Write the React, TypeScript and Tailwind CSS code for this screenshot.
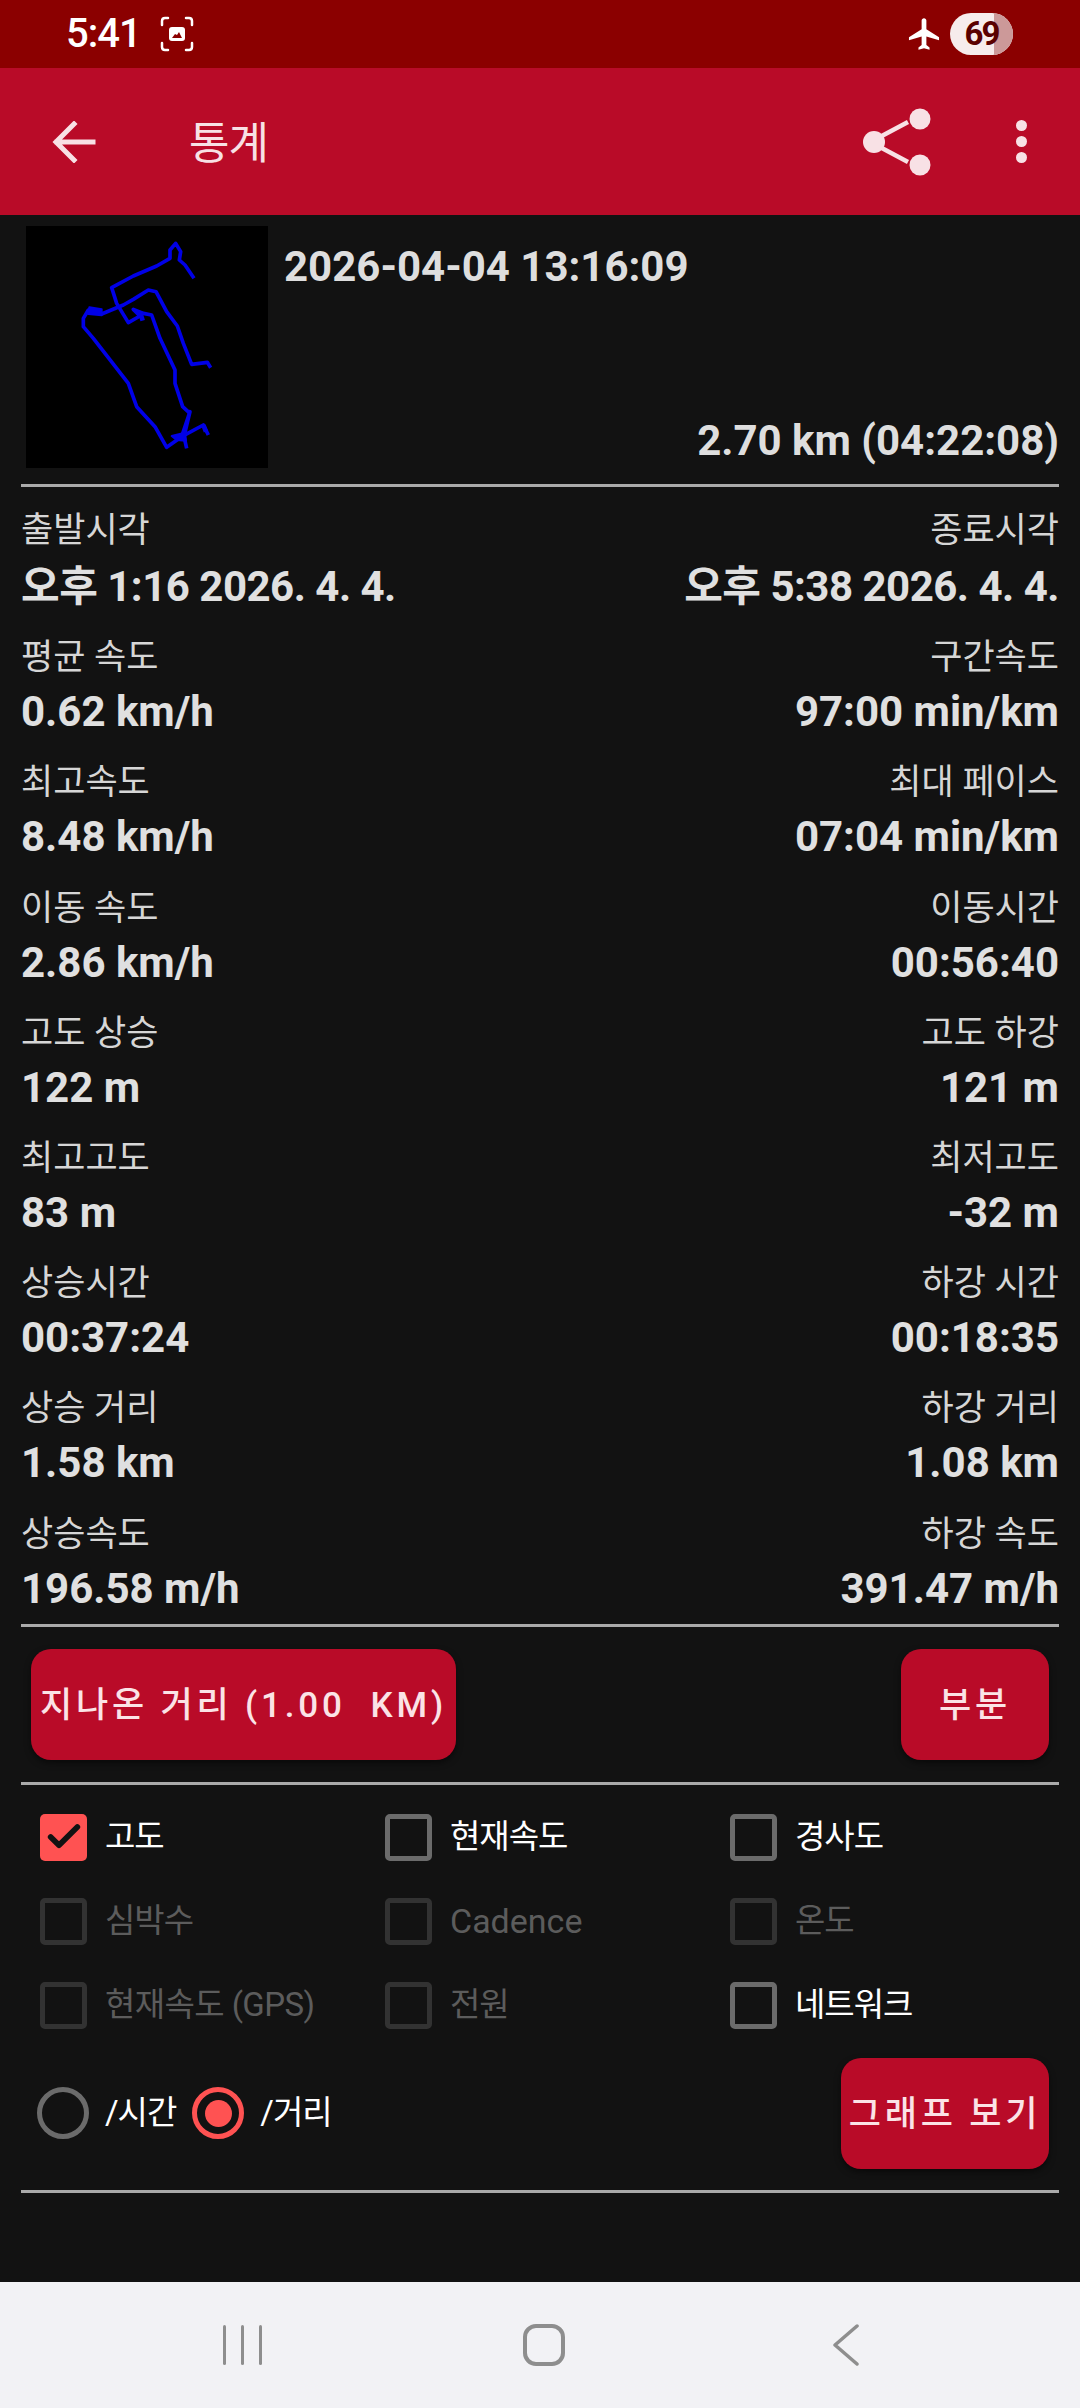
import { Check } from "lucide-react";

const stats = [
  ["출발시각", "오후 1:16 2026. 4. 4.", "종료시각", "오후 5:38 2026. 4. 4."],
  ["평균 속도", "0.62 km/h", "구간속도", "97:00 min/km"],
  ["최고속도", "8.48 km/h", "최대 페이스", "07:04 min/km"],
  ["이동 속도", "2.86 km/h", "이동시간", "00:56:40"],
  ["고도 상승", "122 m", "고도 하강", "121 m"],
  ["최고고도", "83 m", "최저고도", "-32 m"],
  ["상승시간", "00:37:24", "하강 시간", "00:18:35"],
  ["상승 거리", "1.58 km", "하강 거리", "1.08 km"],
  ["상승속도", "196.58 m/h", "하강 속도", "391.47 m/h"],
];

function Divider() {
  return <div className="h-[3px] bg-[#aaaaaa]" />;
}

function StatRow({ row, first }: { row: string[]; first: boolean }) {
  const label = first
    ? "text-[35px] leading-[48px] text-[#d6d6d6]"
    : "mt-[2px] text-[35px] leading-[48px] text-[#d6d6d6]";
  const value = first
    ? "mt-[8px] text-[42px] leading-[48px] font-bold tracking-[-0.5px] text-[#e0e0e0]"
    : "mt-[6px] text-[42px] leading-[48px] font-bold text-[#e0e0e0]";
  return (
    <div className="flex h-[125.2px] justify-between">
      <div className="flex flex-col">
        <span className={label}>{row[0]}</span>
        <span className={value}>{row[1]}</span>
      </div>
      <div className="flex flex-col items-end">
        <span className={label}>{row[2]}</span>
        <span className={value}>{row[3]}</span>
      </div>
    </div>
  );
}

function Box({
  label,
  state,
  type = "text-[33px] tracking-[-1px]",
}: {
  label: string;
  state: "on" | "off" | "disabled";
  type?: string;
}) {
  return (
    <div className="flex h-[47px] items-center">
      {state === "on" ? (
        <div className="flex h-[47px] w-[47px] items-center justify-center rounded-[5px] bg-[#ff5252]">
          <Check size={40} strokeWidth={3.4} className="text-[#121212]" />
        </div>
      ) : (
        <div
          className={
            state === "off"
              ? "h-[47px] w-[47px] rounded-[5px] border-[5px] border-[#6b6b6b]"
              : "h-[47px] w-[47px] rounded-[5px] border-[5px] border-[#323232]"
          }
        />
      )}
      <span className={"ml-[18px] " + type + (state === "disabled" ? " text-[#5c5c5c]" : " text-white")}>
        {label}
      </span>
    </div>
  );
}

function RedButton({ label, className }: { label: string; className: string }) {
  return (
    <button
      className={
        "flex h-[111px] items-center justify-center rounded-[20px] bg-[#b90b28] pt-[5px] text-[35px] font-medium tracking-[3.8px] whitespace-pre text-[#fbe3e6] shadow-[0_3px_6px_rgba(0,0,0,0.5)] " +
        className
      }
    >
      {label}
    </button>
  );
}

export default function App() {
  return (
    <div className="flex h-[2408px] w-[1080px] flex-col overflow-hidden bg-[#121212] font-['Roboto','Noto_Sans_CJK_KR',sans-serif]">
      {/* status bar */}
      <div className="flex h-[68px] items-center justify-between bg-[#8b0000] pr-[67px] pl-[66px]">
        <div className="flex items-center">
          <span className="text-[40px] font-medium tracking-[-1px] text-white">5:41</span>
          <svg viewBox="0 0 36 36" className="ml-[18px] h-[36px] w-[36px]" fill="none" stroke="white" strokeWidth="2.500" strokeLinecap="round">
            <path d="M9 2H6Q3 2 3 5v4M27 2h3q3 0 3 3v4M3 27v4q0 3 3 3h3M33 27v4q0 3-3 3h-3" />
            <rect x="10" y="11" width="16" height="14" rx="3" fill="white" stroke="none" />
            <path d="M13 22l3-4 2 1 2-3 3 6z" fill="#8b0000" stroke="none" />
          </svg>
        </div>
        <div className="flex items-center">
          <svg viewBox="0 0 24 24" className="h-[38px] w-[38px]" fill="white">
            <path d="M21 16v-2l-8-5V3.5C13 2.67 12.33 2 11.5 2S10 2.67 10 3.5V9l-8 5v2l8-2.5V19l-2 1.500V22l3.500-1 3.500 1v-1.500L13 19v-5.500z" transform="translate(0.5 0)" />
          </svg>
          <div className="relative ml-[7px] flex h-[42px] w-[63px] items-center justify-center overflow-hidden rounded-full bg-[#f6ecec]">
            <div className="absolute top-0 right-0 h-full w-[19px] bg-[#cc9999]" />
            <span className="relative text-[33px] font-bold tracking-[-2px] text-[#5a0000]">69</span>
          </div>
        </div>
      </div>

      {/* app bar */}
      <div className="flex h-[147px] items-center bg-[#b90b28] text-[#f8e1e5]">
        <svg viewBox="0 0 44 42" className="ml-[52px] h-[42px] w-[44px]" fill="none" stroke="currentColor" strokeWidth="5" strokeLinecap="square">
          <path d="M41 21H5M22 3L4 21l18 18" />
        </svg>
        <span className="mt-[4px] ml-[93px] text-[44px] leading-none tracking-[-1px]">통계</span>
        <svg viewBox="0 0 70 68" className="mr-[84px] ml-auto h-[68px] w-[70px]" fill="currentColor" stroke="currentColor">
          <path d="M16 30L46 14M16 38l30 16" strokeWidth="4.500" fill="none" />
          <circle cx="12" cy="34" r="11" stroke="none" />
          <circle cx="58" cy="11" r="10.500" stroke="none" />
          <circle cx="58" cy="57" r="10.500" stroke="none" />
        </svg>
        <div className="mr-[53px] flex flex-col gap-[5px]">
          <div className="h-[11px] w-[11px] rounded-full bg-current" />
          <div className="h-[11px] w-[11px] rounded-full bg-current" />
          <div className="h-[11px] w-[11px] rounded-full bg-current" />
        </div>
      </div>

      <div className="flex flex-1 flex-col px-[21px]">
        {/* track header */}
        <div className="flex h-[269px] pt-[11px] pl-[5px]">
          <svg viewBox="78 48 726 726" className="h-[242px] w-[242px] shrink-0 bg-black" fill="none" stroke="#0000e6" strokeWidth="11" strokeLinejoin="round">
            <path d="M582 205L555 165L538 150L542 125L527 100L510 120L510 145L470 168L400 198L335 233L350 280L385 338L420 318L400 298L430 310L455 315L480 385L525 480L525 520L548 590L570 610" />
            <path d="M632 473L622 457L575 463L550 400L532 348L500 305L468 245L445 240L400 268L370 285L305 312L265 300L250 325L250 350L280 385L385 520L410 590L465 650L500 712L545 680L570 605L552 680L560 715M545 680L610 645L625 675" />
            <path d="M268 292L305 298L305 316L265 312Z" fill="#0000e6" strokeWidth="6" />
            <path d="M515 678L555 668L558 692L530 690Z" fill="#0000e6" strokeWidth="6" />
            <path d="M420 305L428 332" strokeWidth="14" />
            <path d="M610 645L618 665" strokeWidth="14" />
          </svg>
          <div className="flex flex-1 flex-col justify-between pb-[18px] pl-[16px]">
            <span className="mt-[16px] text-[42px] leading-[50px] font-bold text-[#dedede]">2026-04-04 13:16:09</span>
            <span className="text-right text-[42px] leading-[50px] font-bold text-[#dedede]">2.70 km (04:22:08)</span>
          </div>
        </div>
        <Divider />

        {/* stats */}
        <div className="flex flex-col pt-[20px]">
          {stats.map((row, i) => (
            <StatRow key={row[0]} row={row} first={i === 0} />
          ))}
        </div>
        <div className="-mt-[10px]">
          <Divider />
        </div>

        {/* buttons */}
        <div className="flex justify-between px-[10px] py-[22px]">
          <RedButton label="지나온 거리 (1.00  KM)" className="w-[425px]" />
          <RedButton label="부분" className="w-[148px]" />
        </div>
        <Divider />

        {/* channels */}
        <div className="grid grid-cols-[345px_345px_1fr] gap-y-[37px] pt-[29px] pl-[19px]">
          <Box label="고도" state="on" />
          <Box label="현재속도" state="off" />
          <Box label="경사도" state="off" />
          <Box label="심박수" state="disabled" />
          <Box label="Cadence" state="disabled" type="text-[34px]" />
          <Box label="온도" state="disabled" />
          <Box label="현재속도 (GPS)" state="disabled" type="text-[33px] tracking-[-0.6px]" />
          <Box label="전원" state="disabled" />
          <Box label="네트워크" state="off" />
        </div>

        {/* axis */}
        <div className="mt-[29px] flex h-[111px] items-center px-[10px]">
          <div className="ml-[6px] h-[52px] w-[52px] rounded-full border-[5px] border-[#6b6b6b]" />
          <span className="ml-[16px] text-[33px] tracking-[-1px] text-white">/시간</span>
          <div className="ml-[16px] flex h-[52px] w-[52px] items-center justify-center rounded-full border-[5px] border-[#ff5252]">
            <div className="h-[27px] w-[27px] rounded-full bg-[#ff5252]" />
          </div>
          <span className="ml-[16px] text-[33px] tracking-[-1px] text-white">/거리</span>
          <RedButton label="그래프 보기" className="ml-auto w-[208px]" />
        </div>
        <div className="mt-[21px]">
          <Divider />
        </div>
      </div>

      {/* navigation bar */}
      <div className="flex h-[126px] items-center bg-[#f2f2f5]">
        <div className="ml-[223px] flex gap-[15px]">
          <div className="h-[40px] w-[3px] rounded-full bg-[#8e8e8e]" />
          <div className="h-[40px] w-[3px] rounded-full bg-[#8e8e8e]" />
          <div className="h-[40px] w-[3px] rounded-full bg-[#8e8e8e]" />
        </div>
        <div className="ml-[261px] h-[42px] w-[42px] rounded-[13px] border-[4px] border-[#8e8e8e]" />
        <svg viewBox="0 0 27 42" className="ml-[267px] h-[42px] w-[27px]" fill="none" stroke="#8e8e8e" strokeWidth="3.5" strokeLinecap="round" strokeLinejoin="round">
          <path d="M25 2L3 21l22 19" />
        </svg>
      </div>
    </div>
  );
}
